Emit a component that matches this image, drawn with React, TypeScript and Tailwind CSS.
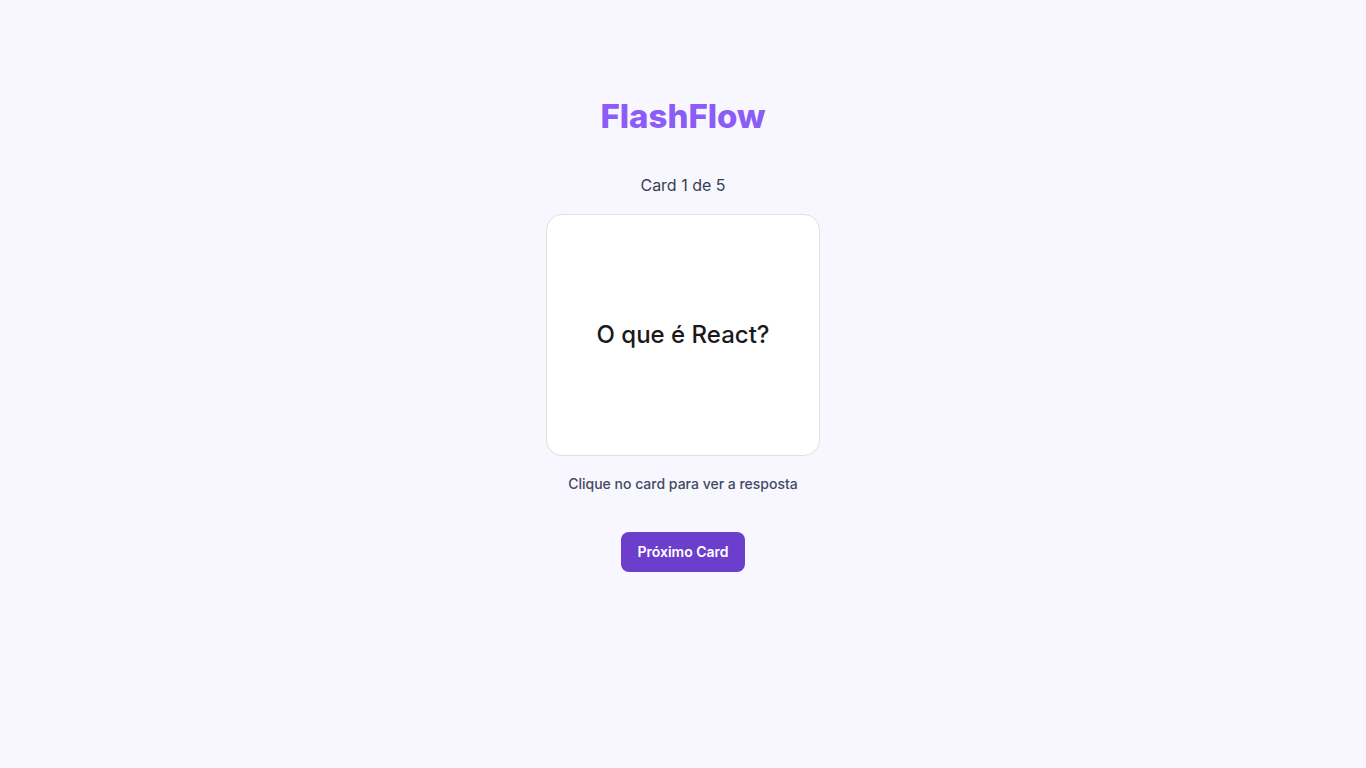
import { useState } from "react";

const cards = [
  { question: "O que é React?", answer: "Uma biblioteca JavaScript para criar interfaces." },
  { question: "O que é JSX?", answer: "Uma extensão de sintaxe para JavaScript." },
  { question: "O que são props?", answer: "Dados passados de um componente pai para um filho." },
  { question: "O que é estado?", answer: "Dados internos que mudam com o tempo." },
  { question: "O que é um hook?", answer: "Uma função que dá acesso a recursos do React." },
];

export default function App() {
  const [index, setIndex] = useState(0);
  const [flipped, setFlipped] = useState(false);
  const card = cards[index];

  const next = () => {
    setIndex((index + 1) % cards.length);
    setFlipped(false);
  };

  return (
    <main className="flex min-h-screen flex-col items-center bg-[#f8f7ff] px-4 pt-24 pb-12 font-['Inter',sans-serif]">
      <h1 className="text-[33px] leading-10 font-extrabold text-[#8b5cf6]">FlashFlow</h1>
      <p className="mt-9 text-base leading-[26px] text-[#374151]">
        Card {index + 1} de {cards.length}
      </p>
      <button
        type="button"
        onClick={() => setFlipped(!flipped)}
        className="mt-4 flex min-h-[242px] w-full max-w-[274px] cursor-pointer items-center justify-center rounded-2xl border border-[#e0e0e0] bg-white p-6 text-2xl leading-9 font-medium text-[#1a1a1a]"
      >
        {flipped ? card.answer : card.question}
      </button>
      <p className="mt-4 text-sm leading-6 font-medium text-[#434b5f]">
        Clique no card para ver a resposta
      </p>
      <button
        type="button"
        onClick={next}
        className="mt-9 h-10 cursor-pointer rounded-lg bg-[#6c3ecc] px-4 text-sm font-semibold text-white"
      >
        Próximo Card
      </button>
    </main>
  );
}
